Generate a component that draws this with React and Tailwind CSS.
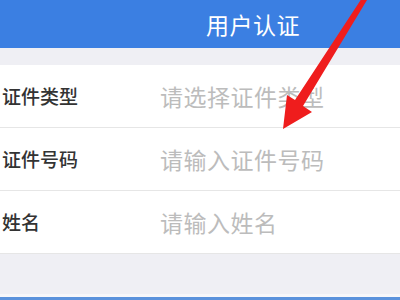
export default function App() {
  const rows = [
    { label: '证件类型', placeholder: '请选择证件类型' },
    { label: '证件号码', placeholder: '请输入证件号码' },
    { label: '姓名', placeholder: '请输入姓名' },
  ];

  return (
    <div
      className="relative flex flex-col w-[400px] h-[300px] overflow-hidden bg-[#efeff4]"
      style={{ fontFamily: '"Noto Sans CJK SC", "Noto Sans", sans-serif' }}
    >
      <div className="flex items-center justify-center h-[48px] pl-[106px] bg-[#3b7fe2] text-white text-[23px] tracking-[0.5px]">
        用户认证
      </div>

      <div className="h-[17px] shrink-0" />

      <div className="bg-white">
        {rows.map(row => (
          <div key={row.label} className="flex items-center h-[63px] border-b border-[#e6e6e6]">
            <div className="w-[160px] pl-[2px] text-[19px] font-medium text-[#333333]">{row.label}</div>
            <div className="text-[23px] tracking-[0.5px] text-[#bcbcbc]">{row.placeholder}</div>
          </div>
        ))}
      </div>

      <div className="flex-1" />
      <div className="h-[3px] bg-[#f7f7fa]" />
      <div className="h-[3px] bg-[#5b92dc]" />

      {/* red annotation arrow */}
      <svg className="absolute left-0 top-0 pointer-events-none" width="400" height="300" viewBox="0 0 400 300">
        <polygon
          points="283,129 287,95 295,100 362,-2 367,0 303,106 312,112"
          fill="#ef1d1d"
        />
      </svg>
    </div>
  );
}
